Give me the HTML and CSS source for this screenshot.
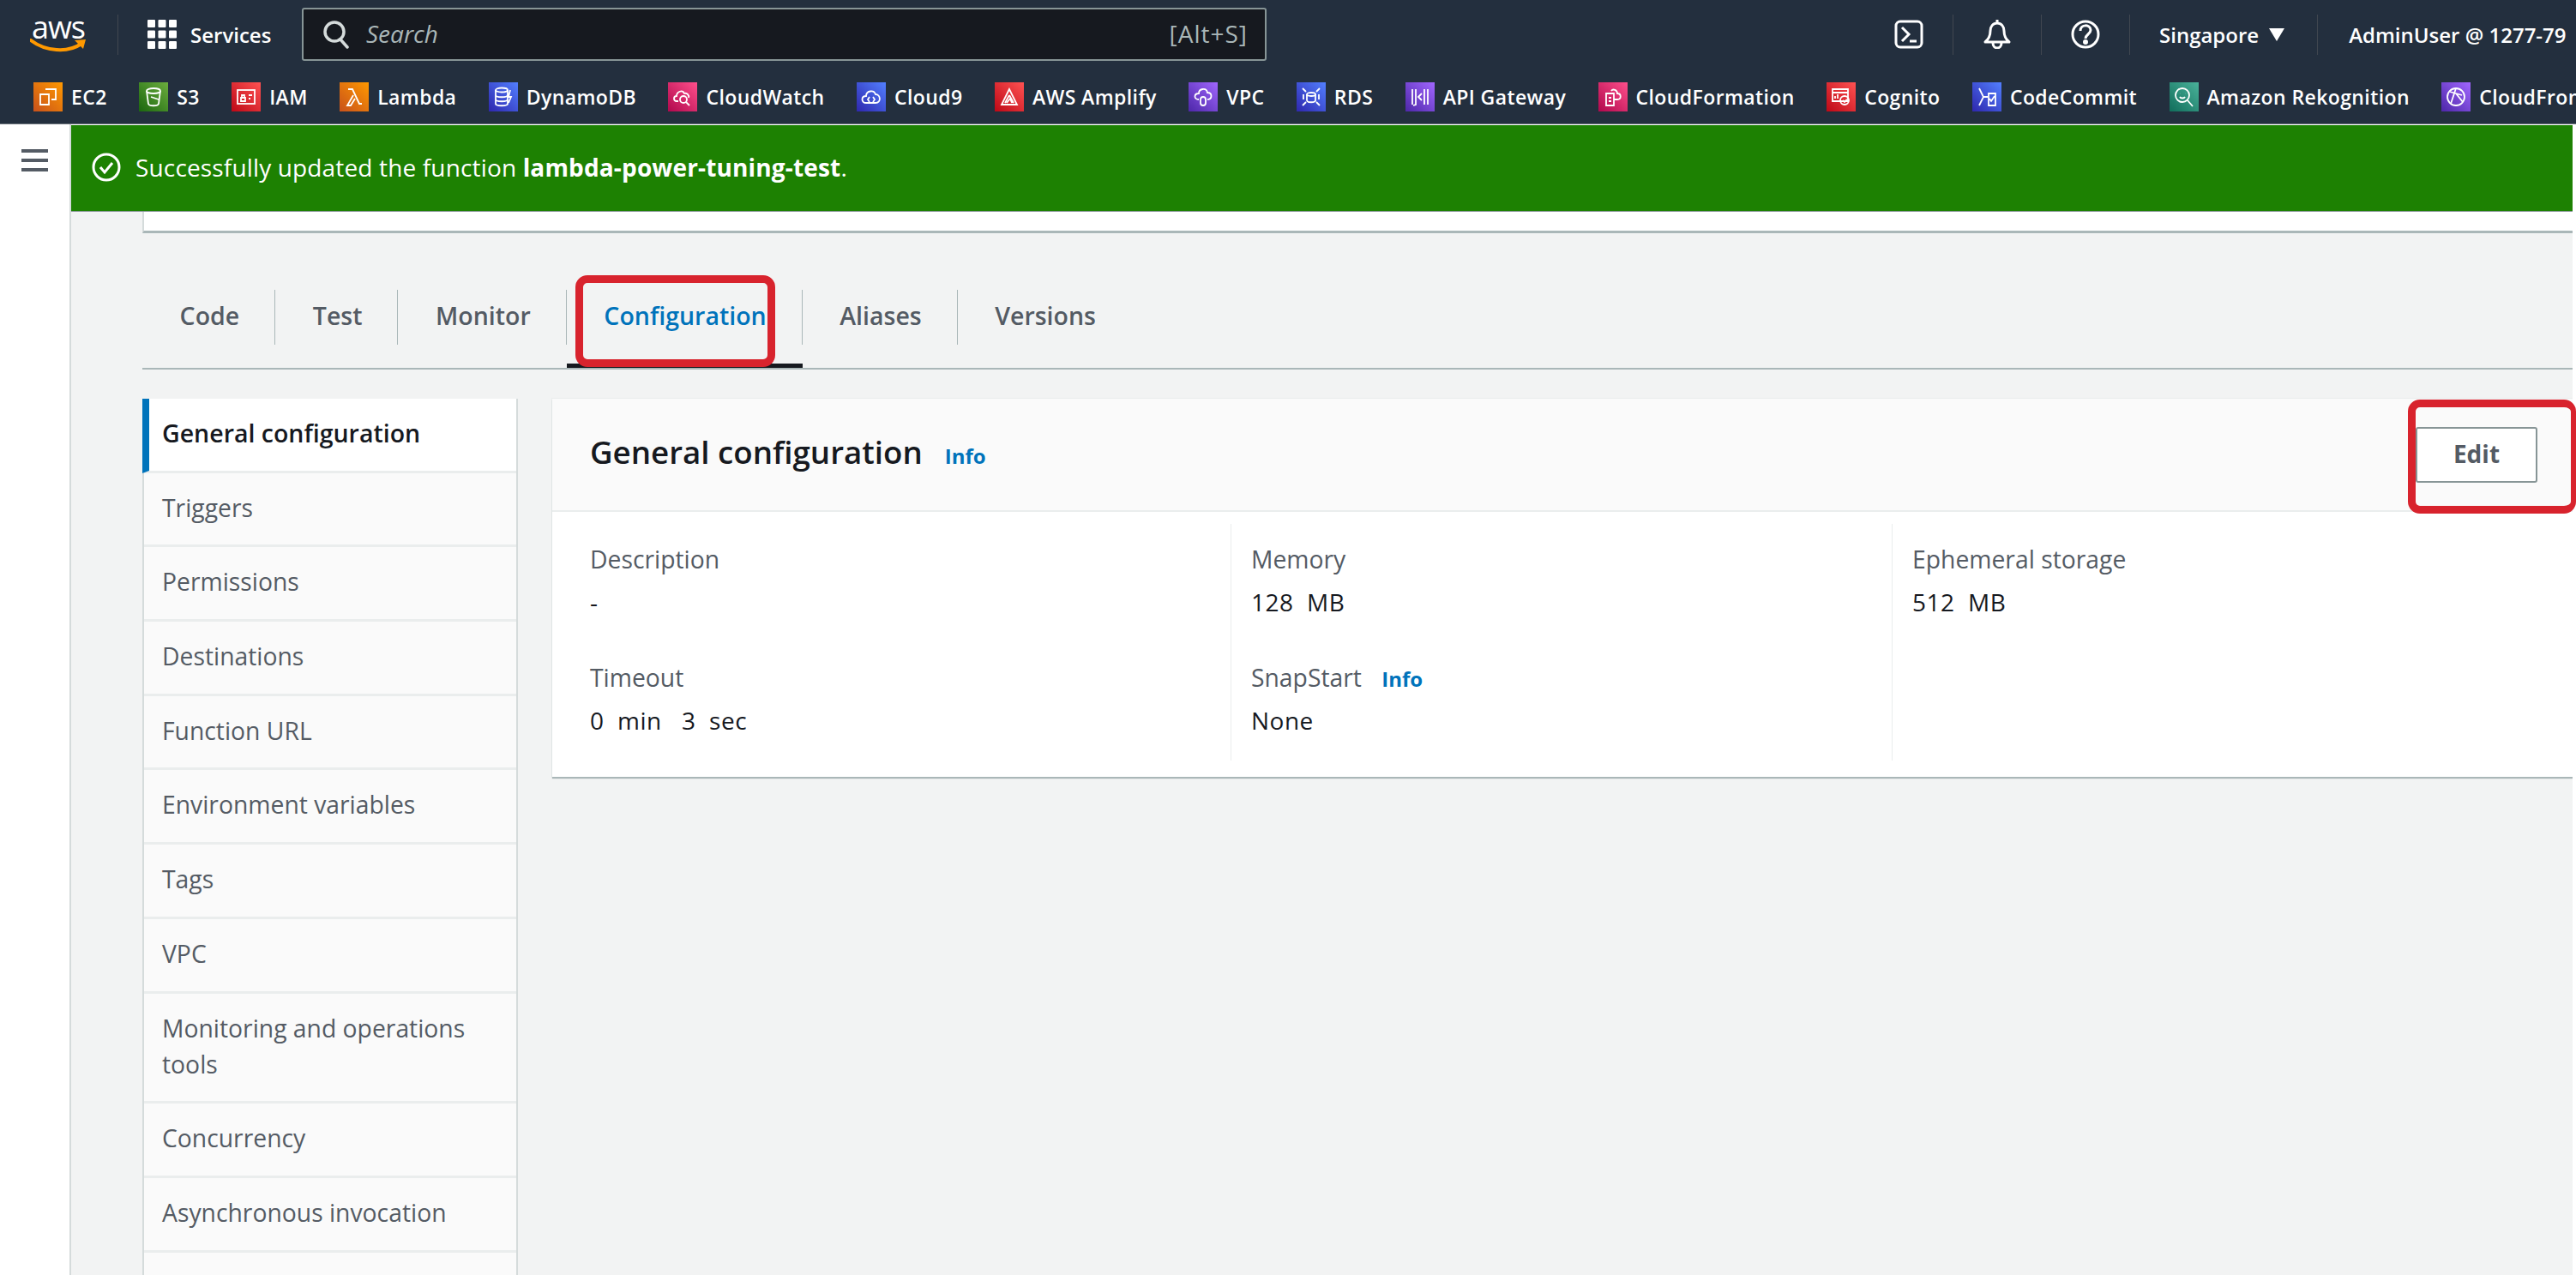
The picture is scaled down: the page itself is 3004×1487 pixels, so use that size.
FILE: index.html
```html
<!DOCTYPE html>
<html lang="en">
<head>
<meta charset="utf-8">
<title>lambda-power-tuning-test - Lambda</title>
<link rel="stylesheet" href="styles.css">
</head>
<body>
<div class="app">
<header class="console">
  <div class="topbar">
    <div class="logo"><span class="logo-text">aws</span>
      <svg class="swoosh" width="66" height="16" viewBox="0 0 66 16"><path d="M1 2C18 15 44 17 60 6" fill="none" stroke="#f90" stroke-width="4" stroke-linecap="round"/><path d="M52 2l13-1-3 11z" fill="#f90"/></svg>
    </div>
    <span class="vr vr-logo"></span>
    <svg class="grid-icon" width="34" height="34" viewBox="0 0 34 34" fill="#fff"><rect width="9" height="9" x="0" y="0" rx="1"/><rect width="9" height="9" x="12.500" y="0" rx="1"/><rect width="9" height="9" x="25" y="0" rx="1"/><rect width="9" height="9" x="0" y="12.500" rx="1"/><rect width="9" height="9" x="12.500" y="12.500" rx="1"/><rect width="9" height="9" x="25" y="12.500" rx="1"/><rect width="9" height="9" x="0" y="25" rx="1"/><rect width="9" height="9" x="12.500" y="25" rx="1"/><rect width="9" height="9" x="25" y="25" rx="1"/></svg>
    <span class="services">Services</span>
    <div class="search">
      <svg width="30" height="34" viewBox="0 0 30 34" fill="none" stroke="#d5dbdb" stroke-width="3.500"><circle cx="13" cy="14" r="11"/><path d="M20 23l8 9" stroke-linecap="round"/></svg>
      <span class="search-ph">Search</span>
      <span class="search-key">[Alt+S]</span>
    </div>
    <div class="top-right">
      <svg class="ti" width="34" height="34" viewBox="0 0 34 34" fill="none" stroke="#fff" stroke-width="3"><rect x="2" y="2" width="30" height="30" rx="5"/><path d="M9 9l8 8-8 8M18 25h8"/></svg>
      <span class="vr vr-a"></span>
      <svg class="ti" width="34" height="34" viewBox="0 0 34 34" fill="none" stroke="#fff" stroke-width="3"><path d="M3 26c5-4 6-8 6-13 0-5 3-9 8-9s8 4 8 9c0 5 1 9 6 13z" stroke-linejoin="round"/><path d="M17 0v4M12 27c0 8 10 8 10 0"/></svg>
      <span class="vr vr-a"></span>
      <svg class="ti" width="34" height="34" viewBox="0 0 34 34" fill="none" stroke="#fff" stroke-width="3"><circle cx="17" cy="17" r="15"/><path d="M11 13c0-8 12-8 12-1 0 5-6 5-6 10"/><circle cx="17" cy="26" r="1.500" fill="#fff"/></svg>
      <span class="vr vr-a"></span>
      <span class="region">Singapore</span>
      <svg class="caret" width="18" height="15" viewBox="0 0 18 15"><path d="M0 0h18L9 15z" fill="#fff"/></svg>
      <span class="vr vr-b"></span>
      <span class="user">AdminUser @ 1277-79</span>
    </div>
  </div>
  <nav class="shortcuts">
    <a class="sc"><span class="si orange"><svg width="24" height="24" viewBox="0 0 24 24"><path d="M9 3h12v12h-5M3 9h10v12H3z"/></svg></span>EC2</a>
    <a class="sc"><span class="si green"><svg width="24" height="24" viewBox="0 0 24 24"><ellipse cx="12" cy="5" rx="8" ry="3"/><path d="M4 5l2 15c1 3 11 3 12 0l2-15M9 12l9 3"/></svg></span>S3</a>
    <a class="sc"><span class="si red"><svg width="24" height="24" viewBox="0 0 24 24"><rect x="2" y="4" width="20" height="16"/><path d="M6 13h5v4H6zM7 13v-3h3v3M15 10h4M15 14h2"/></svg></span>IAM</a>
    <a class="sc"><span class="si orange"><svg width="24" height="24" viewBox="0 0 24 24"><path d="M5 3h5l8 17h3M11 10L4 22h4l5-8"/></svg></span>Lambda</a>
    <a class="sc"><span class="si blue"><svg width="24" height="24" viewBox="0 0 24 24"><ellipse cx="10" cy="4" rx="7" ry="2.500"/><path d="M3 4v16c0 3 14 3 14 0V4M3 10c0 3 14 3 14 0M3 15c0 3 14 3 14 0M20 4l-2 8h3l-3 7"/></svg></span>DynamoDB</a>
    <a class="sc"><span class="si pink"><svg width="24" height="24" viewBox="0 0 24 24"><path d="M7 17H5c-4 0-4-6 0-6 0-5 7-8 9-3 3-1 6 2 5 5"/><circle cx="13" cy="15" r="4"/><path d="M16 18l4 4"/></svg></span>CloudWatch</a>
    <a class="sc"><span class="si blue"><svg width="24" height="24" viewBox="0 0 24 24"><path d="M6 19c-6 0-6-8 0-8 0-6 9-8 11-2 6 0 7 10 0 10zM10 12l-2 3 2 3M14 12l2 3-2 3"/></svg></span>Cloud9</a>
    <a class="sc"><span class="si red"><svg width="24" height="24" viewBox="0 0 24 24"><path d="M12 3L3 21h18zM12 10l-5 9M12 10l5 9M9 19l4-5 2 5"/></svg></span>AWS Amplify</a>
    <a class="sc"><span class="si purple"><svg width="24" height="24" viewBox="0 0 24 24"><path d="M7 15c-6 0-6-7 0-7 0-6 9-7 10-1 6 0 6 8 0 8"/><rect x="9" y="12" width="6" height="10" rx="3"/></svg></span>VPC</a>
    <a class="sc"><span class="si blue"><svg width="24" height="24" viewBox="0 0 24 24"><ellipse cx="12" cy="9" rx="5" ry="2"/><path d="M7 9v7c0 3 10 3 10 0V9M2 2l4 4M22 2l-4 4M2 22l4-4M22 22l-4-4M3 9v6M21 9v6"/></svg></span>RDS</a>
    <a class="sc"><span class="si purple"><svg width="24" height="24" viewBox="0 0 24 24"><path d="M3 3v18M7 3v18l-3 1M17 3v18M21 3v18M14 8l-4 4 4 4"/></svg></span>API Gateway</a>
    <a class="sc"><span class="si pink"><svg width="24" height="24" viewBox="0 0 24 24"><path d="M4 8h9v14H4zM7 13h3M7 17h3M13 15h4c5 0 5-7 0-7 0-4-5-6-7-3"/></svg></span>CloudFormation</a>
    <a class="sc"><span class="si red"><svg width="24" height="24" viewBox="0 0 24 24"><path d="M2 3h18v14H2zM2 7h18M5 14v-3M8 14v-5"/><circle cx="16" cy="16" r="5"/><path d="M14 16l2 2 3-3"/></svg></span>Cognito</a>
    <a class="sc"><span class="si blue"><svg width="24" height="24" viewBox="0 0 24 24"><path d="M3 2l5 10-5 10M8 12h5M14 8h8v14h-8zM15 14l2 3 4-6"/></svg></span>CodeCommit</a>
    <a class="sc"><span class="si teal"><svg width="24" height="24" viewBox="0 0 24 24"><circle cx="10" cy="10" r="8"/><path d="M16 16l6 7M7 8h.1M13 8h.1M7 12c1 2 5 2 6 0"/></svg></span>Amazon Rekognition</a>
    <a class="sc"><span class="si purple"><svg width="24" height="24" viewBox="0 0 24 24"><circle cx="12" cy="12" r="10"/><path d="M5 6l14 4M12 2L6 20M12 8l8 10"/></svg></span>CloudFront</a>
  </nav>
</header>
<div class="workspace">
  <aside class="rail">
    <svg width="31" height="26" viewBox="0 0 31 26" fill="#545b64"><rect width="31" height="4"/><rect y="11" width="31" height="4"/><rect y="22" width="31" height="4"/></svg>
  </aside>
  <main class="main">
    <div class="flash">
      <svg width="34" height="34" viewBox="0 0 34 34" fill="none" stroke="#fff" stroke-width="3"><circle cx="17" cy="17" r="15"/><path d="M10 17l5 6 9-11"/></svg>
      <span>Successfully updated the function <b>lambda-power-tuning-test</b>.</span>
    </div>
    <div class="content">
      <div class="strip"></div>
      <div class="tabs">
        <a class="tab">Code</a>
        <a class="tab">Test</a>
        <a class="tab">Monitor</a>
        <a class="tab active">Configuration</a>
        <a class="tab">Aliases</a>
        <a class="tab last">Versions</a>
      </div>
      <div class="config">
        <ul class="side">
          <li class="side-item current">General configuration</li>
          <li class="side-item">Triggers</li>
          <li class="side-item">Permissions</li>
          <li class="side-item">Destinations</li>
          <li class="side-item">Function URL</li>
          <li class="side-item">Environment variables</li>
          <li class="side-item">Tags</li>
          <li class="side-item">VPC</li>
          <li class="side-item">Monitoring and operations tools</li>
          <li class="side-item">Concurrency</li>
          <li class="side-item">Asynchronous invocation</li>
          <li class="side-item side-empty"></li>
        </ul>
        <section class="panel">
          <div class="panel-head">
            <h2>General configuration</h2>
            <a class="info info-title">Info</a>
            <button class="edit">Edit</button>
          </div>
          <div class="panel-body">
            <div class="col">
              <div class="kv"><div class="k">Description</div><div class="v">-</div></div>
              <div class="kv"><div class="k">Timeout</div><div class="v">0&nbsp; min &nbsp; 3&nbsp; sec</div></div>
            </div>
            <div class="col">
              <div class="kv"><div class="k">Memory</div><div class="v">128&nbsp; MB</div></div>
              <div class="kv"><div class="k">SnapStart <a class="info info-k">Info</a></div><div class="v">None</div></div>
            </div>
            <div class="col col-last">
              <div class="kv"><div class="k">Ephemeral storage</div><div class="v">512&nbsp; MB</div></div>
            </div>
          </div>
        </section>
      </div>
    </div>
  </main>
</div>
</div>
<div class="mark mark-tab"></div>
<div class="mark mark-edit"></div>
</body>
</html>
```
FILE: styles.css
```css
* { box-sizing: border-box; }
html, body { margin: 0; padding: 0; }
body {
  width: 3004px;
  height: 1487px;
  overflow: hidden;
  background: #fff;
  position: relative;
  font-family: "Open Sans", "Noto Sans", sans-serif;
  color: #16191f;
}
.app { width: 3004px; }
.console { height: 145px; background: #232f3e; color: #fff; border-bottom: 1px solid #687078; }
.topbar { height: 80px; display: flex; align-items: center; padding-left: 35px; }
.logo { width: 66px; height: 44px; display: flex; flex-direction: column; align-items: center; }
.logo-text { font: 400 36px/28px "Open Sans", sans-serif; letter-spacing: -1px; height: 26px; }
.swoosh { display: block; margin-top: 1px; }
.vr { width: 1px; height: 47px; background: #414750; flex: none; }
.vr-logo { margin: 0 34px 0 36px; }
.services { font-size: 24px; font-weight: 600; margin-left: 16px; width: 130px; }
.search {
  width: 1125px; height: 62px;
  display: flex; align-items: center;
  background: #16191f;
  border: 2px solid #879596;
  border-radius: 3px;
  padding: 0 20px 0 23px;
  color: #aab7b8;
  font-size: 28px;
}
.search-ph { font-style: italic; margin: 0 0 3px 20px; }
.search-key { margin: 0 0 3px auto; letter-spacing: 1px; }
.top-right { display: flex; align-items: center; margin-left: 732px; white-space: nowrap; font-size: 24px; font-weight: 600; flex: 1; }
.ti { flex: none; }
.top-right .vr-a { margin: 0 34px; }
.region { margin-right: 12px; }
.caret { flex: none; }
.top-right .vr-b { margin: 0 36px 0 38px; }
.user { flex: none; }
.shortcuts { height: 64px; display: flex; align-items: flex-start; padding: 16px 0 0 39px; white-space: nowrap; overflow: hidden; }
.sc { display: flex; align-items: center; height: 34px; margin-right: 37.400px; font-size: 23px; font-weight: 600; letter-spacing: .4px; flex: none; }
.si { width: 34px; height: 34px; display: flex; align-items: center; justify-content: center; margin-right: 10px; flex: none; }
.si svg { fill: none; stroke: #fff; stroke-width: 1.800; }
.orange { background: linear-gradient(45deg, #c8511b, #f90); }
.green { background: linear-gradient(45deg, #1b660f, #6cae3e); }
.red { background: linear-gradient(45deg, #bd0816, #ff5252); }
.blue { background: linear-gradient(45deg, #2e27ad, #527fff); }
.pink { background: linear-gradient(45deg, #b0084d, #ff4f8b); }
.purple { background: linear-gradient(45deg, #4d27a8, #a166ff); }
.teal { background: linear-gradient(45deg, #116d5b, #4ab29a); }

.workspace { display: flex; height: 1342px; }
.rail { width: 83px; flex: none; border-right: 2px solid #d5dbdb; padding: 29px 0 0 25px; background: #fff; }
.rail svg { display: block; }
.main { flex: 1; width: 2921px; padding-right: 4px; padding-top: 1px; }
.flash {
  height: 101px;
  background: #1d8102;
  color: #fff;
  display: flex; align-items: center;
  padding: 0 0 2px 24px;
  font-size: 28px;
  letter-spacing: .15px;
  border-bottom: 1px solid #879596;
}
.flash svg { margin-right: 17px; flex: none; }
.flash b { font-weight: 700; }
.content { background: #f2f3f3; height: 1240px; padding-left: 83px; overflow: hidden; }
.strip { height: 25px; background: #fff; border-left: 2px solid #d5dbdb; border-bottom: 3px solid #aab7b8; }
.tabs { display: flex; height: 159px; align-items: flex-end; border-bottom: 2px solid #aab7b8; }
.tab { position: relative; display: flex; height: 91px; padding: 0 42px 32px 43.600px; align-items: center; font-size: 28.500px; font-weight: 600; color: #545b64; }
.tab::after { content: ""; position: absolute; right: 0; top: 0; width: 1px; height: 64px; background: #aab7b8; }
.tab.last::after { display: none; }
.tab.active { color: #0073bb; box-shadow: inset 0 -5px 0 #16191f; }
.config { display: grid; grid-template-columns: 438px 1fr; column-gap: 40px; margin-top: 34px; align-items: start; }
.side { list-style: none; margin: 0; padding: 0; background: #fafafa; border-left: 2px solid #d5dbdb; border-right: 2px solid #d5dbdb; }
.side-item { padding: 19px 24px 22.700px 21px; font-size: 28.300px; line-height: 42px; color: #545b64; border-bottom: 3px solid #eaeded; }
.side-item.current { background: #fff; color: #16191f; font-weight: 600; font-size: 28.500px; border-left: 8px solid #0073bb; margin-left: -2px; padding-left: 15px; }
.side-empty { height: 60px; border-bottom: 0; }
.panel { background: #fff; box-shadow: 0 2px 1px #aab7b8, 0 0 0 1px #eaeded; }
.panel-head { height: 132px; background: #fafafa; display: flex; align-items: center; padding: 0 41px 0 44px; border-bottom: 2px solid #eaeded; }
.panel-head h2 { margin: -6px 0 0; font-size: 36.700px; font-weight: 600; color: #16191f; }
.info { color: #0073bb; font-weight: 700; font-size: 24px; }
.info-title { margin-left: 26px; margin-top: 2px; }
.info-k { margin-left: 16px; }
.edit { margin-left: auto; width: 142px; height: 65px; padding: 0 0 3px; background: #fff; border: 2px solid #879596; border-radius: 3px; font: 700 28px "Open Sans", sans-serif; color: #545b64; }
.panel-body { display: grid; grid-template-columns: 792px 771px 1fr; padding: 14px 0 19px; }
.col { height: 276px; padding: 20px 23px 0 44px; border-right: 1px solid #eaeded; }
.col + .col { padding-left: 23px; }
.col-last { border-right: 0; }
.kv { height: 138px; }
.k { height: 42px; font-size: 28.300px; line-height: 42px; color: #545b64; }
.v { font-size: 28px; letter-spacing: .5px; line-height: 42px; margin-top: 8px; color: #16191f; }

.mark { position: absolute; border: 9px solid #d8232d; border-radius: 14px; }
.mark-tab { left: 671px; top: 321px; width: 233px; height: 107px; }
.mark-edit { left: 2808px; top: 466px; width: 196px; height: 133px; border-right-width: 6px; }
```
